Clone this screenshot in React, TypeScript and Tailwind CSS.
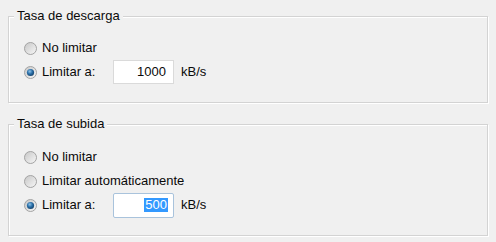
import type { ReactNode } from "react";

function Radio({ checked }: { checked?: boolean }) {
  return (
    <svg width="13" height="13" viewBox="0 0 13 13" className="shrink-0">
      <defs>
        <linearGradient id="rf" x1="0" y1="0" x2="1" y2="1">
          <stop offset="0" stopColor="#c6c6c6" />
          <stop offset="1" stopColor="#f8f8f8" />
        </linearGradient>
        <radialGradient id="dot" cx="0.4" cy="0.35" r="0.7">
          <stop offset="0" stopColor="#8fc3e8" />
          <stop offset="0.5" stopColor="#2a6fa8" />
          <stop offset="1" stopColor="#143f66" />
        </radialGradient>
      </defs>
      <circle cx="6.5" cy="6.5" r="6" fill="url(#rf)" stroke="#a3a3a3" strokeWidth="1" />
      {checked && <circle cx="6.5" cy="6.5" r="3.6" fill="url(#dot)" />}
    </svg>
  );
}

function Option({ checked, label, children }: { checked?: boolean; label: string; children?: ReactNode }) {
  return (
    <div className="flex h-6 items-center">
      <Radio checked={checked} />
      <span className="ml-[5px] w-[66px] whitespace-nowrap">{label}</span>
      {children}
    </div>
  );
}

function Group({ title, className, children }: { title: string; className: string; children: ReactNode }) {
  return (
    <div
      className={`relative border border-[#d3d3d3] shadow-[inset_1px_1px_0_#ffffff,1px_1px_0_#ffffff] ${className}`}
    >
      <span className="absolute -top-[9px] left-[5px] bg-[#f0f0f0] px-[3px] leading-[16px]">{title}</span>
      {children}
    </div>
  );
}

export default function App() {
  return (
    <div
      className="h-[242px] w-[496px] bg-[#f0f0f0] pl-2 pr-[8px] pt-4 text-[13px] text-[#0a0a0a]"
      style={{ fontFamily: '"Liberation Sans", Arial, sans-serif' }}
    >
      <Group title="Tasa de descarga" className="h-[87px] pl-[15px] pt-[19px]">
        <Option label="No limitar" />
        <Option checked label="Limitar a:">
          <div className="ml-[5px] flex h-6 w-[61px] items-center justify-end border border-[#dadada] bg-white pr-[7px]">
            1000
          </div>
          <span className="ml-[7px]">kB/s</span>
        </Option>
      </Group>

      <Group title="Tasa de subida" className="mt-[21px] h-[112px] pl-[15px] pt-[20px]">
        <Option label="No limitar" />
        <Option label="Limitar automáticamente" />
        <Option checked label="Limitar a:">
          <div className="ml-[5px] flex h-[25px] w-[61px] items-center justify-end rounded-[2px] border border-[#a9c3dc] bg-white pr-[5px]">
            <span className="bg-[#3399ff] px-[1px] leading-[14px] text-white">500</span>
          </div>
          <span className="ml-[7px]">kB/s</span>
        </Option>
      </Group>
    </div>
  );
}
